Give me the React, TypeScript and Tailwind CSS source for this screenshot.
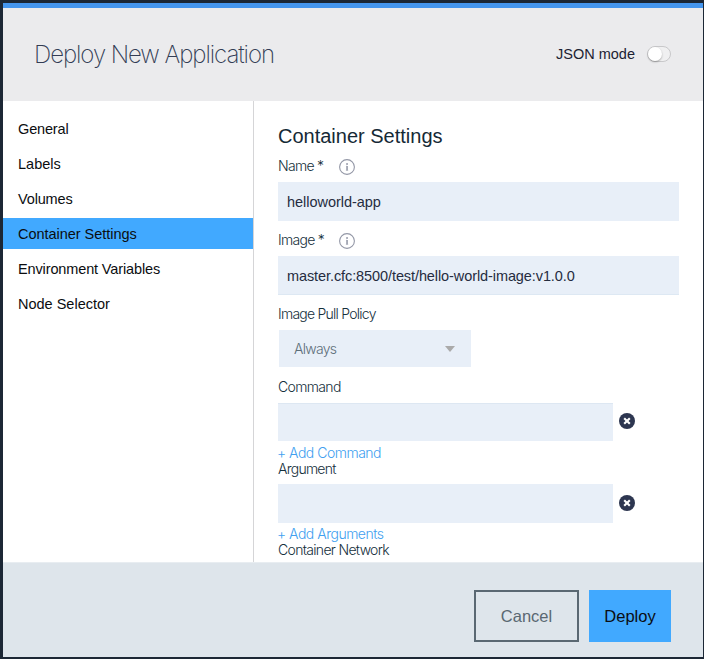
import React from "react";

const sections = [
  { label: "General", tracking: "tracking-[-0.15px]" },
  { label: "Labels", tracking: "tracking-[0px]" },
  { label: "Volumes", tracking: "tracking-[-0.15px]" },
  { label: "Container Settings", tracking: "tracking-[-0.03px]", active: true },
  { label: "Environment Variables", tracking: "tracking-[-0.13px]" },
  { label: "Node Selector", tracking: "tracking-[0px]" },
];

const light = "font-['Inter','Liberation_Sans',sans-serif] whitespace-nowrap";

function InfoIcon() {
  return (
    <svg className="block h-4 w-4" viewBox="0 0 16 16" fill="none">
      <circle cx="8" cy="8" r="7.4" stroke="#9397a6" strokeWidth="1.1" />
      <rect x="7.2" y="4.2" width="1.7" height="1.6" fill="#8f93a3" />
      <path d="M8.05 7v4.6" stroke="#8f93a3" strokeWidth="1.5" />
      <path d="M7 7.3h1M6.9 11.3h2.3" stroke="#a9acb9" strokeWidth="0.7" />
    </svg>
  );
}

function RemoveButton() {
  return (
    <button className="mb-[2px] ml-[6px] block h-4 w-4" aria-label="Remove">
      <svg className="block h-4 w-4" viewBox="0 0 16 16">
        <circle cx="8" cy="8" r="8" fill="#2d3650" />
        <path d="M5.2 5.2l5.6 5.6M10.8 5.2l-5.6 5.6" stroke="#fff" strokeWidth="2.1" />
      </svg>
    </button>
  );
}

function Label({ text, tracking, info }: { text: string; tracking: string; info?: boolean }) {
  return (
    <div className="flex h-4 items-center">
      <span className={`${light} ${tracking} text-[14px] leading-4 font-light text-[#152f3b] ${info ? "w-[61px] pb-[2px]" : ""}`}>{text}</span>
      {info && <InfoIcon />}
    </div>
  );
}

export default function App() {
  return (
    <div className="h-[659px] w-[704px] overflow-hidden bg-[#1c2735] pt-[3px] pr-px pb-[2px] pl-[3px] font-['Liberation_Sans',sans-serif]">
      <div className="flex h-full flex-col bg-white">
        <header className="flex h-[98px] shrink-0 items-center justify-between border-t-[5px] border-[#4596ee] bg-[#ebebed] pr-8 pl-8">
          <h1 className={`${light} -ml-px text-[24px] leading-8 font-extralight tracking-[-1.06px] text-[#323c54]`}>Deploy New Application</h1>
          <div className="flex items-center pb-[2px]">
            <span className="text-[14.5px] leading-5 tracking-[0px] text-[#1c2233]">JSON mode</span>
            <span className="ml-3 flex h-4 w-6 items-center rounded-full border border-[#c8c8ca] bg-[#f0f0f1]">
              <span className="h-[14px] w-[14px] rounded-full bg-white shadow-[0_1px_2px_rgba(0,0,0,0.3)]" />
            </span>
          </div>
        </header>

        <div className="flex h-[461px] shrink-0">
          <nav className="flex w-[251px] shrink-0 flex-col gap-1 border-r border-[#d5d5d7] pt-3">
            {sections.map((s) => (
              <a
                key={s.label}
                className={`block h-[31px] pl-[15px] text-[14.5px] leading-[32px] text-[#0b0d10] ${s.tracking} ${s.active ? "bg-[#41a9ff]" : ""}`}
              >
                {s.label}
              </a>
            ))}
          </nav>

          <main className="flex-1 overflow-hidden pl-6">
            <h2 className="mt-[25px] text-[20px] leading-5 tracking-[0px] text-[#152935]">Container Settings</h2>
            <div className="mt-[13px]"><Label text="Name *" tracking="tracking-[-0.7px]" info /></div>
            <div className="mt-[7px] h-[39px] w-[401px] bg-[#e8eff8] pl-[9px] text-[14.5px] leading-[41px] tracking-[-0.03px] text-[#252c3f]">helloworld-app</div>
            <div className="mt-[12px]"><Label text="Image *" tracking="tracking-[-0.7px]" info /></div>
            <div className="mt-[7px] h-[39px] w-[401px] border-b border-[#dde8f3] bg-[#e8eff8] pl-[9px] text-[14.5px] leading-[41px] tracking-[-0.09px] text-[#252c3f]">
              master.cfc:8500/test/hello-world-image:v1.0.0
            </div>
            <div className="mt-[11px]"><Label text="Image Pull Policy" tracking="tracking-[-0.75px]" /></div>
            <div className="mt-[8px] ml-px flex h-[37px] w-48 items-center justify-between bg-[#e8eff8] pr-4 pl-[15px]">
              <span className={`${light} text-[14px] leading-5 font-light tracking-[-0.7px] text-[#5d6e79]`}>Always</span>
              <svg className="block h-[6px] w-[10px]" viewBox="0 0 10 6"><path d="M0 0h10L5 6z" fill="#aaa" /></svg>
            </div>
            <div className="mt-3"><Label text="Command" tracking="tracking-[-0.65px]" /></div>
            <div className="mt-2 flex h-[39px] items-center pb-px">
              <div className="h-[38px] w-[335px] border-t border-[#dde7f2] bg-[#e8eff8]" />
              <RemoveButton />
            </div>
            <a className={`${light} mt-[3px] -ml-px block h-4 text-[14px] leading-4 font-light tracking-[-0.5px] text-[#41a0f0]`}>+ Add Command</a>
            <Label text="Argument" tracking="tracking-[-0.75px]" />
            <div className="mt-[7px] flex h-[39px] items-center">
              <div className="h-[39px] w-[335px] bg-[#e8eff8]" />
              <RemoveButton />
            </div>
            <a className={`${light} mt-[3px] -ml-px block h-4 text-[14px] leading-4 font-light tracking-[-0.5px] text-[#41a0f0]`}>+ Add Arguments</a>
            <Label text="Container Network" tracking="tracking-[-0.68px]" />
          </main>
        </div>

        <footer className="flex flex-1 items-start justify-end gap-[10px] border-t border-[#e8edf1] bg-[#dee5eb] pt-[27px] pr-8">
          <button className="h-[52px] w-[105px] border-2 border-[#5a6872] text-[16.5px] leading-[49px] tracking-[0px] text-[#5a6872]">Cancel</button>
          <button className="h-[52px] w-[82px] bg-[#41a9ff] text-[16.5px] leading-[53px] tracking-[0px] text-[#0b0d12]">Deploy</button>
        </footer>
      </div>
    </div>
  );
}
